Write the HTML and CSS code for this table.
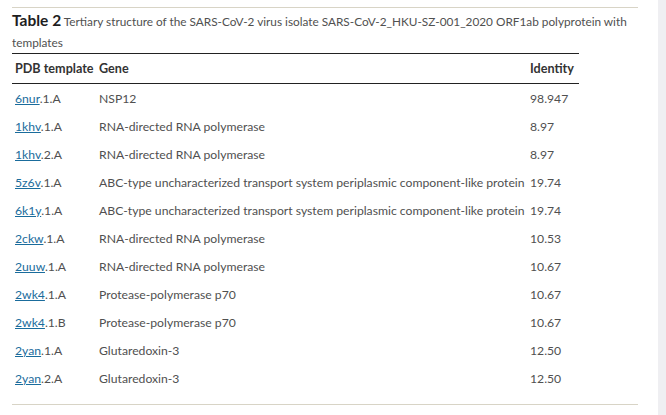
FILE: index.html
```html
<!DOCTYPE html>
<html>
<head>
<meta charset="utf-8">
<link rel="stylesheet" href="styles.css">
</head>
<body>
<div class="page">
  <main class="content">
    <div class="table-wrap">
      <p class="caption"><b class="label">Table 2</b> Tertiary structure of the SARS-CoV-2 virus isolate SARS-CoV-2_HKU-SZ-001_2020 ORF1ab polyprotein with templates</p>
      <table class="data">
        <colgroup><col class="c1"><col class="c2"><col class="c3"></colgroup>
        <thead>
          <tr><th>PDB template</th><th>Gene</th><th>Identity</th></tr>
        </thead>
        <tbody>
          <tr><td><a href="#">6nur</a>.1.A</td><td>NSP12</td><td>98.947</td></tr>
          <tr><td><a href="#">1khv</a>.1.A</td><td>RNA-directed RNA polymerase</td><td>8.97</td></tr>
          <tr><td><a href="#">1khv</a>.2.A</td><td>RNA-directed RNA polymerase</td><td>8.97</td></tr>
          <tr><td><a href="#">5z6v</a>.1.A</td><td>ABC-type uncharacterized transport system periplasmic component-like protein</td><td>19.74</td></tr>
          <tr><td><a href="#">6k1y</a>.1.A</td><td>ABC-type uncharacterized transport system periplasmic component-like protein</td><td>19.74</td></tr>
          <tr><td><a href="#">2ckw</a>.1.A</td><td>RNA-directed RNA polymerase</td><td>10.53</td></tr>
          <tr><td><a href="#">2uuw</a>.1.A</td><td>RNA-directed RNA polymerase</td><td>10.67</td></tr>
          <tr><td><a href="#">2wk4</a>.1.A</td><td>Protease-polymerase p70</td><td>10.67</td></tr>
          <tr><td><a href="#">2wk4</a>.1.B</td><td>Protease-polymerase p70</td><td>10.67</td></tr>
          <tr><td><a href="#">2yan</a>.1.A</td><td>Glutaredoxin-3</td><td>12.50</td></tr>
          <tr><td><a href="#">2yan</a>.2.A</td><td>Glutaredoxin-3</td><td>12.50</td></tr>
        </tbody>
      </table>
    </div>
  </main>
  <aside class="rail"></aside>
</div>
</body>
</html>
```
FILE: styles.css
```css
html, body {
  margin: 0;
  padding: 0;
  background: #fff;
}
body {
  font-family: Lato, "Open Sans", sans-serif;
  color: #505050;
}
.page {
  display: flex;
  height: 415px;
}
.content {
  width: 658px;
  padding-left: 12px;
  padding-top: 7px;
  box-sizing: border-box;
}
.rail {
  width: 8px;
  background: #efeff2;
}
.table-wrap {
  width: 626px;
  border-top: 1px solid #d8d4c6;
  border-bottom: 1px solid #d8d4c6;
  padding-bottom: 12px;
}
.caption {
  margin: 0;
  padding-top: 3px;
  font-size: 11.8px;
  line-height: 21px;
  color: #505050;
}
.label {
  font-size: 15.5px;
  line-height: 1;
  font-weight: 700;
  color: #1e1e1e;
}
.data {
  border-collapse: collapse;
  table-layout: fixed;
  width: 567px;
  border-top: 1px solid #222;
  font-size: 12.2px;
}
.c1 { width: 84px; }
.c2 { width: 431px; }
.c3 { width: 52px; }
.data th {
  text-align: left;
  font-weight: 700;
  font-size: 12.6px;
  color: #333;
  height: 29px;
  padding: 0 0 0 3px;
  border-bottom: 1px solid #222;
  vertical-align: middle;
  white-space: nowrap;
}
.data td {
  height: 28px;
  padding: 0 0 0 3px;
  vertical-align: middle;
  white-space: nowrap;
}
.data a {
  color: #1a6c9c;
  text-decoration: underline;
}
```
